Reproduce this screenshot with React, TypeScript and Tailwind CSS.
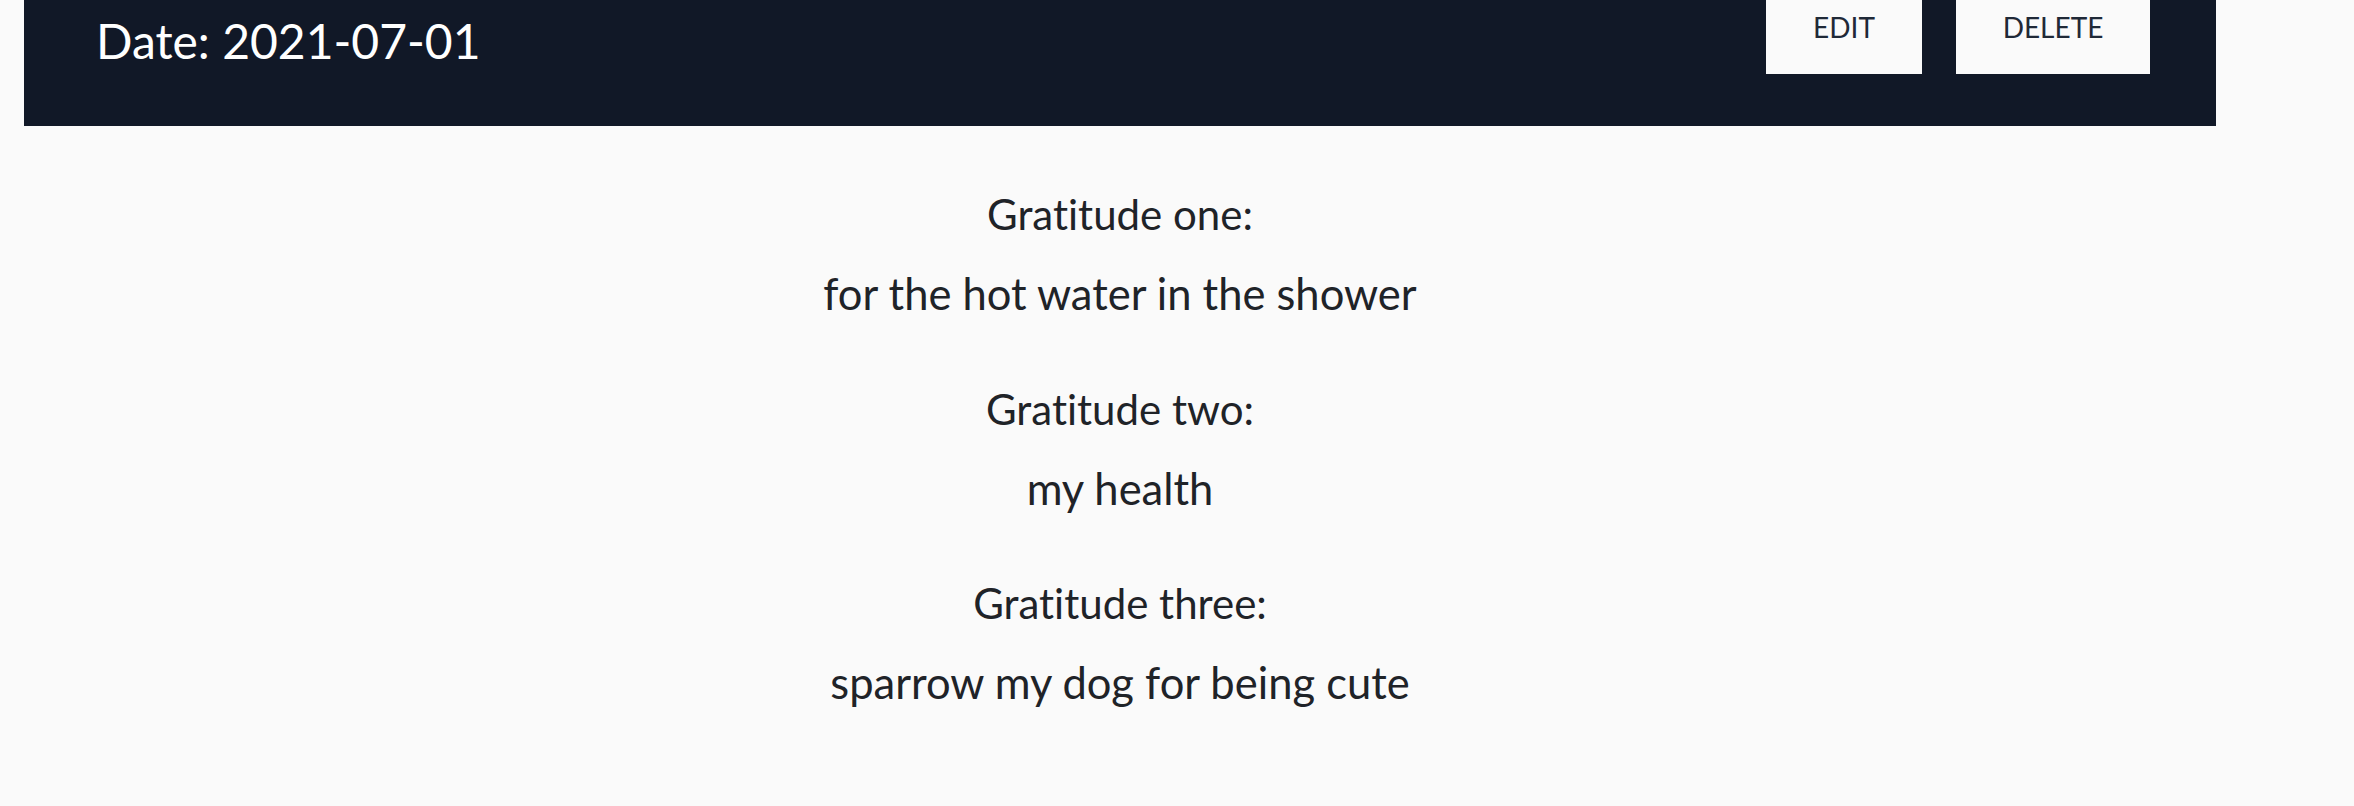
import React from 'react';

const entries = [
  { label: 'Gratitude one:', value: 'for the hot water in the shower' },
  { label: 'Gratitude two:', value: 'my health' },
  { label: 'Gratitude three:', value: 'sparrow my dog for being cute' },
];

export default function App() {
  return (
    <div className="min-h-screen bg-[#fafafa] font-['Lato',sans-serif] [font-variant-ligatures:none]">
      <div className="ml-[24px] w-[2192px]">
        {/* HEADER BAR */}
        <header className="flex h-[126px] items-start justify-between bg-[#111827] pl-[72px] pr-[66px]">
          <h1 className="pt-[17px] text-[48px] font-normal leading-none text-white">
            Date: 2021-07-01
          </h1>
          <div className="flex gap-[34px]">
            <button className="flex h-[74px] w-[156px] items-start justify-center bg-[#fafafa] pt-[13px] text-[28px] font-normal leading-none text-[#1f2937]">
              EDIT
            </button>
            <button className="flex h-[74px] w-[194px] items-start justify-center bg-[#fafafa] pt-[13px] text-[28px] font-normal leading-none text-[#1f2937]">
              DELETE
            </button>
          </div>
        </header>

        {/* ENTRIES */}
        <section className="flex flex-col items-center gap-[72px] pt-[67px] text-center text-[#1f2328]">
          {entries.map((entry, idx) => (
            <div key={idx} className="flex flex-col items-center gap-[37px]">
              <p className="text-[42px] leading-none">{entry.label}</p>
              <p className="text-[43.5px] leading-none">{entry.value}</p>
            </div>
          ))}
        </section>
      </div>
    </div>
  );
}
